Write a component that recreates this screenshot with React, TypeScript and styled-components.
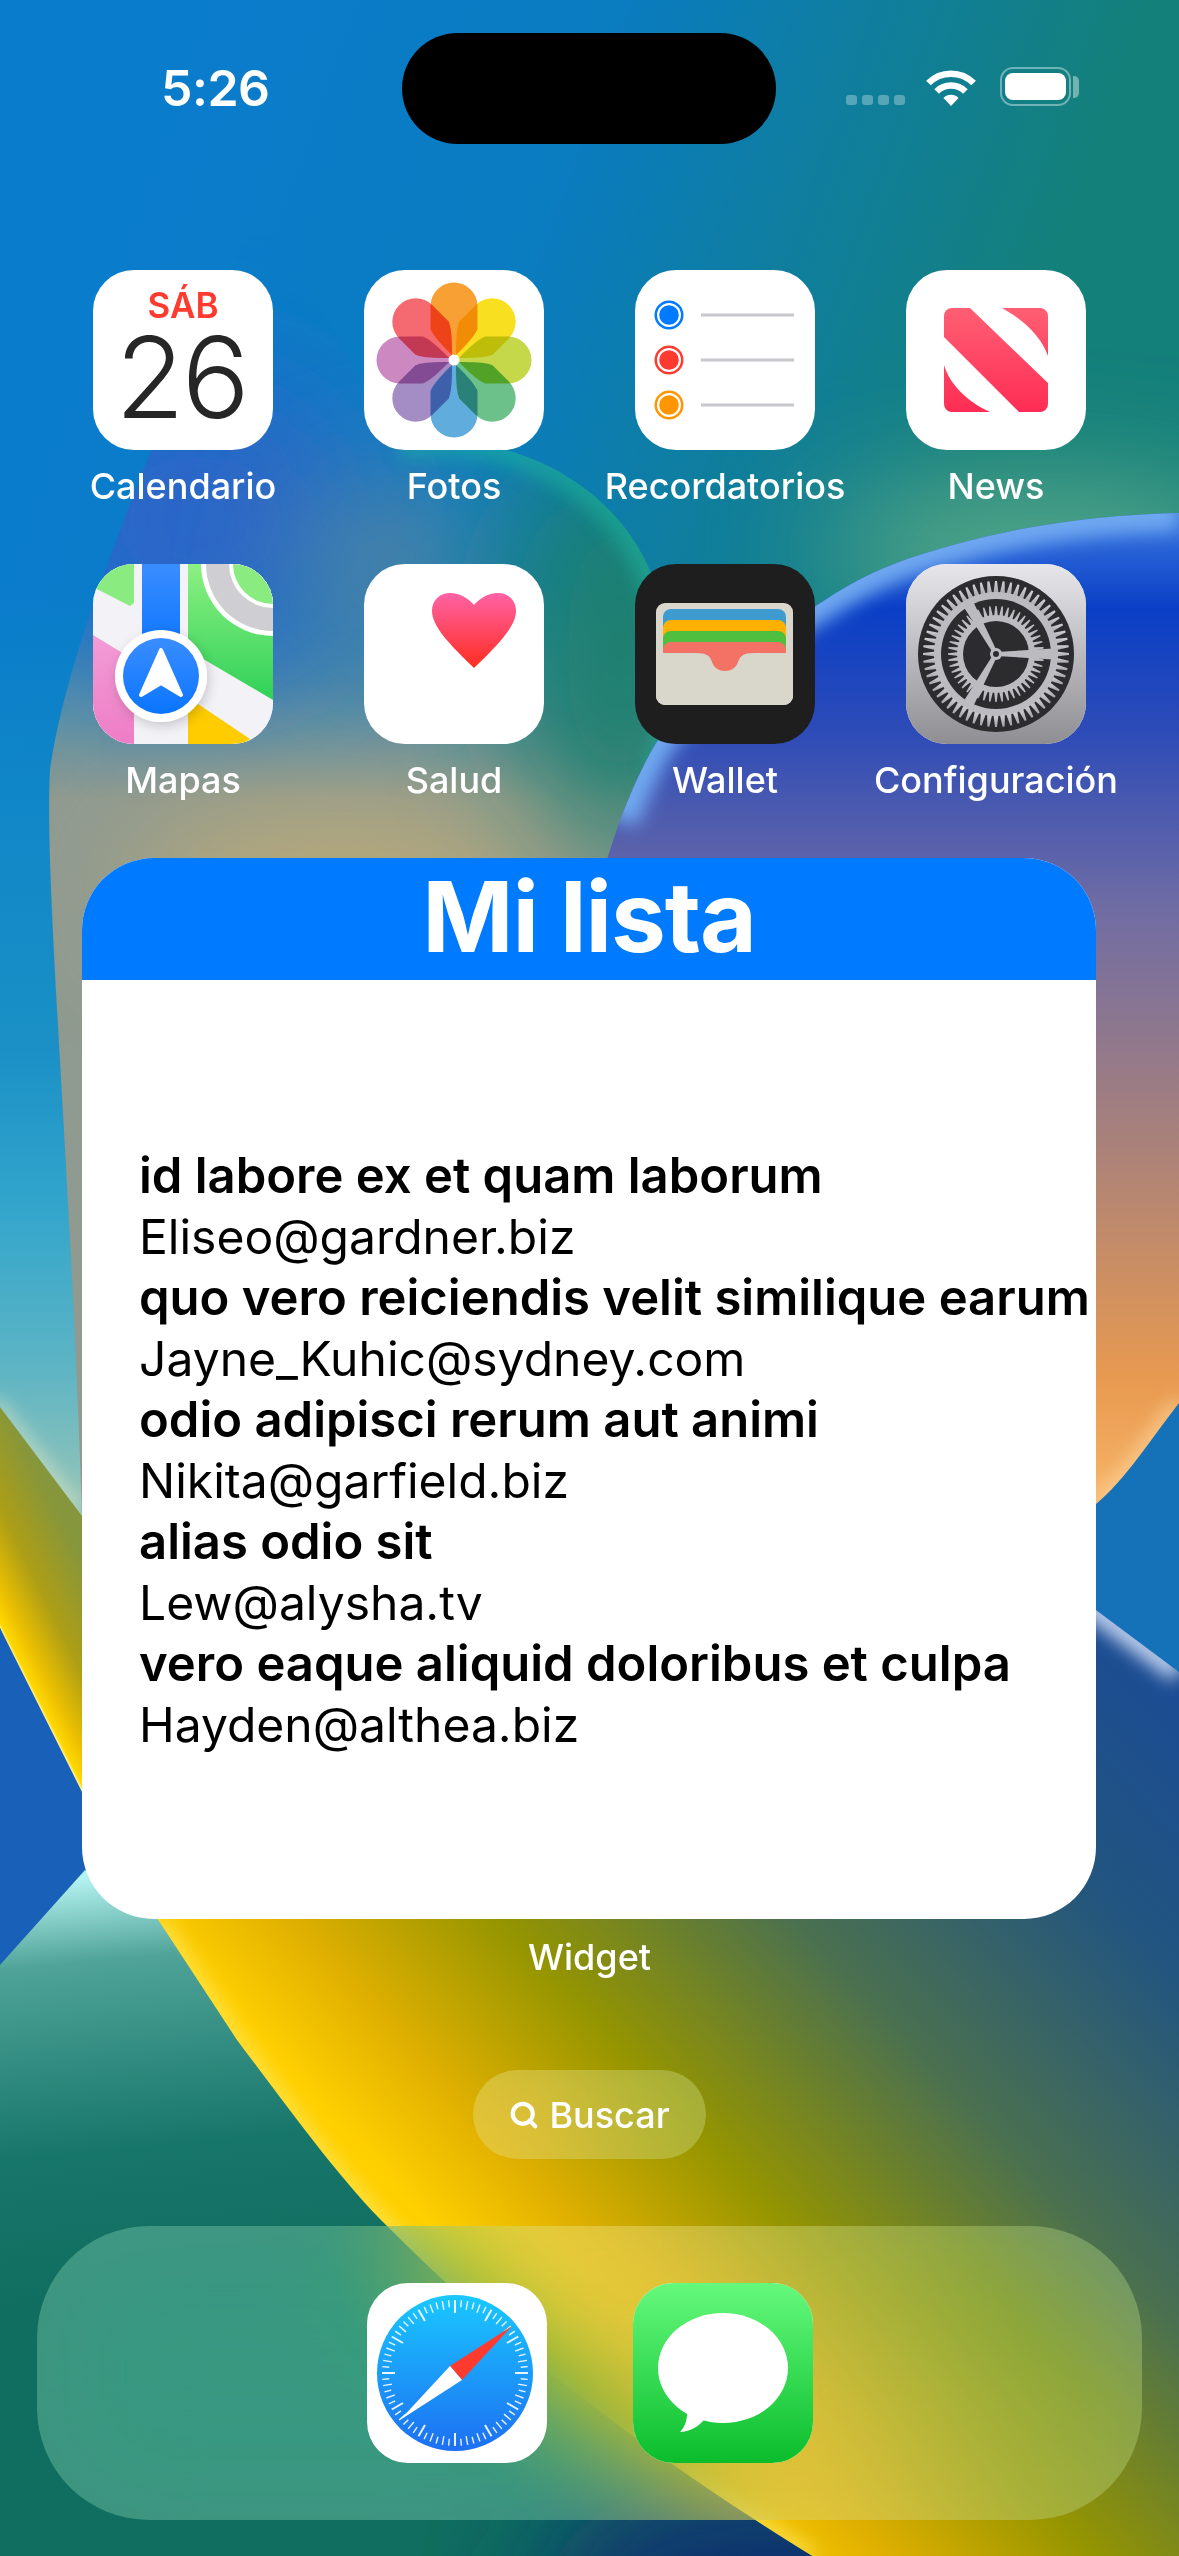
import { ReactNode } from "react";
import styled, { createGlobalStyle } from "styled-components";
import { Search } from "lucide-react";

const GlobalStyle = createGlobalStyle`
  html, body {
    margin: 0;
    padding: 0;
    width: 1179px;
    height: 2556px;
    overflow: hidden;
    font-family: "Inter", "Liberation Sans", sans-serif;
  }
`;

const Screen = styled.div`
  position: relative;
  width: 1179px;
  height: 2556px;
  overflow: hidden;
  display: flex;
  flex-direction: column;
  color: #fff;
  background: #0a7cc8;
`;

const WallpaperSvg = styled.svg`
  position: absolute;
  inset: 0;
  width: 1179px;
  height: 2556px;
`;

const Content = styled.div`
  position: relative;
  display: flex;
  flex-direction: column;
`;

const StatusBar = styled.div`
  display: flex;
  align-items: center;
  height: 111px;
  margin-top: 33px;
`;

const TimeSlot = styled.div`
  width: 402px;
  padding-left: 161px;
  box-sizing: border-box;
  font-size: 50px;
  font-weight: 600;
  letter-spacing: -0.5px;
  line-height: 111px;
  height: 111px;
`;

const Island = styled.div`
  width: 374px;
  height: 111px;
  border-radius: 56px;
  background: #000;
`;

const StatusIcons = styled.div`
  display: flex;
  align-items: flex-end;
  padding-left: 70px;
  padding-bottom: 4px;
`;

const SignalDots = styled.div`
  display: flex;
  gap: 5px;
  margin-right: 21px;
  margin-bottom: 1px;
`;

const SignalDot = styled.div`
  width: 11px;
  height: 10px;
  border-radius: 3px;
  background: rgba(255, 255, 255, 0.3);
`;

const BatteryBody = styled.div`
  width: 71px;
  height: 39px;
  box-sizing: border-box;
  margin-left: 24px;
  padding: 4px 3px 4px 3px;
  border: 2px solid rgba(255, 255, 255, 0.4);
  border-radius: 13px;
`;

const BatteryFill = styled.div`
  height: 100%;
  border-radius: 8px;
  background: #fff;
`;

const BatteryNub = styled.div`
  width: 6px;
  height: 22px;
  margin: 0 0 8px 2px;
  border-radius: 0 5px 5px 0;
  background: rgba(255, 255, 255, 0.4);
`;

const AppGrid = styled.div`
  display: grid;
  grid-template-columns: repeat(4, 180px);
  column-gap: 91px;
  row-gap: 58px;
  margin: 126px 0 0 93px;
`;

const Tile = styled.div`
  display: flex;
  flex-direction: column;
  align-items: center;
  height: 236px;
`;

const AppIcon = styled.div<{ $bg?: string }>`
  width: 180px;
  height: 180px;
  flex: none;
  border-radius: 41px;
  overflow: hidden;
  position: relative;
  background: ${(p) => p.$bg || "#fff"};

  svg {
    display: block;
  }
`;

const AppLabel = styled.div`
  margin-top: 16px;
  font-size: 36px;
  line-height: 40px;
  font-weight: 500;
  white-space: nowrap;
`;

const CalendarFace = styled.div`
  display: flex;
  flex-direction: column;
  align-items: center;
  height: 100%;
`;

const CalendarDay = styled.div`
  margin-top: 15px;
  font-size: 35px;
  line-height: 40px;
  font-weight: 600;
  color: #ff3b30;
`;

const CalendarDate = styled.div`
  margin-left: -4px;
  font-size: 113px;
  line-height: 104px;
  font-weight: 300;
  letter-spacing: -3px;
  color: #262626;
`;

const Widget = styled.div`
  display: flex;
  flex-direction: column;
  width: 1014px;
  height: 1061px;
  margin: 58px 0 0 82px;
  border-radius: 72px;
  overflow: hidden;
  background: #fff;
`;

const WidgetHeader = styled.div`
  height: 122px;
  background: #007aff;
  text-align: center;
  font-size: 98px;
  line-height: 118px;
  font-weight: 700;
  letter-spacing: -1.1px;
  flex: none;
`;

const WidgetBody = styled.div`
  flex: 1;
  display: flex;
  flex-direction: column;
  justify-content: center;
  padding-left: 57px;
  color: #000;
`;

const ItemLine = styled.div<{ $bold?: boolean }>`
  font-size: ${(p) => (p.$bold ? "49px" : "48px")};
  line-height: 61px;
  font-weight: ${(p) => (p.$bold ? 600 : 400)};
  white-space: nowrap;
`;

const WidgetLabel = styled.div`
  margin-top: 18px;
  text-align: center;
  font-size: 36px;
  line-height: 40px;
  font-weight: 500;
`;

const SearchPill = styled.div`
  display: flex;
  align-items: center;
  justify-content: center;
  gap: 10px;
  align-self: center;
  width: 233px;
  height: 89px;
  margin-top: 93px;
  border-radius: 45px;
  font-size: 36px;
  font-weight: 500;
  background: rgba(225, 255, 215, 0.25);
  backdrop-filter: blur(40px) saturate(1.5);
`;

const Dock = styled.div`
  display: flex;
  align-items: center;
  justify-content: center;
  gap: 86px;
  width: 1105px;
  height: 294px;
  margin: 67px 0 0 37px;
  border-radius: 112px;
  background: rgba(225, 255, 225, 0.25);
  backdrop-filter: blur(70px) saturate(1.4);
`;

const lowEdge = "M157 1918 L237 2040 C290 2110 340 2180 387 2226 C500 2340 640 2450 812 2556";

const Wallpaper = () => (
  <WallpaperSvg viewBox="0 0 1179 2556" aria-hidden="true">
    <defs>
      <linearGradient id="sky" gradientUnits="userSpaceOnUse" x1="150" y1="120" x2="1000" y2="420">
        <stop offset="0" stopColor="#0a7ccc" />
        <stop offset="0.45" stopColor="#0a7cc0" />
        <stop offset="1" stopColor="#14807a" />
      </linearGradient>
      <linearGradient id="strip" gradientUnits="userSpaceOnUse" x1="0" y1="600" x2="0" y2="1500">
        <stop offset="0" stopColor="#0f86c8" stopOpacity="0" />
        <stop offset="0.2" stopColor="#0f86c8" />
        <stop offset="0.5" stopColor="#1a90c6" />
        <stop offset="0.68" stopColor="#34a6cc" />
        <stop offset="0.85" stopColor="#5cb4c4" />
        <stop offset="1" stopColor="#94c4b8" />
      </linearGradient>
      <linearGradient id="blobBase" gradientUnits="userSpaceOnUse" x1="0" y1="580" x2="0" y2="800">
        <stop offset="0" stopColor="#8f9a90" stopOpacity="0" />
        <stop offset="1" stopColor="#8f9a90" />
      </linearGradient>
      <linearGradient id="blobB" gradientUnits="userSpaceOnUse" x1="0" y1="510" x2="0" y2="1500">
        <stop offset="0" stopColor="#3a78e0" />
        <stop offset="0.1" stopColor="#0a3fc6" />
        <stop offset="0.22" stopColor="#2c4bb8" />
        <stop offset="0.4" stopColor="#6f6ca4" />
        <stop offset="0.65" stopColor="#ac8278" />
        <stop offset="0.88" stopColor="#e89a50" />
        <stop offset="1" stopColor="#f6b468" />
      </linearGradient>
      <linearGradient id="bandLeft" gradientUnits="userSpaceOnUse" x1="175" y1="1640" x2="40" y2="1708">
        <stop offset="0.3" stopColor="#85963c" />
        <stop offset="0.65" stopColor="#ae9e14" />
        <stop offset="0.88" stopColor="#ecc000" />
        <stop offset="0.98" stopColor="#ffd800" />
        <stop offset="1" stopColor="#fff0a0" />
      </linearGradient>
      <linearGradient id="tealLow" gradientUnits="userSpaceOnUse" x1="60" y1="1880" x2="100" y2="2300">
        <stop offset="0" stopColor="#b4f2f0" />
        <stop offset="0.2" stopColor="#4fa398" />
        <stop offset="0.65" stopColor="#17766a" />
        <stop offset="1" stopColor="#0f6e5f" />
      </linearGradient>
      <linearGradient id="band" gradientUnits="userSpaceOnUse" x1="500" y1="2300" x2="1197" y2="1649">
        <stop offset="0" stopColor="#ffd000" />
        <stop offset="0.11" stopColor="#e0b000" />
        <stop offset="0.27" stopColor="#959500" />
        <stop offset="0.5" stopColor="#4a7050" />
        <stop offset="0.75" stopColor="#22557f" />
        <stop offset="1" stopColor="#1a4a98" />
      </linearGradient>
      <filter id="soft" filterUnits="userSpaceOnUse" x="-400" y="-400" width="2000" height="3400">
        <feGaussianBlur stdDeviation="60" />
      </filter>
      <filter id="edge" filterUnits="userSpaceOnUse" x="-400" y="-400" width="2000" height="3400">
        <feGaussianBlur stdDeviation="9" />
      </filter>
      <clipPath id="clipA">
        <path d="M262 205 C200 330 70 620 50 770 C44 880 70 1150 82 1516 L650 1516 L655 780 C672 760 680 700 665 620 C640 480 500 425 400 445 Z" />
      </clipPath>
      <clipPath id="clipB">
        <path d="M1179 513 C1100 515 1030 525 972 540 C910 556 870 570 825 600 C760 640 690 700 656 743 C640 770 630 795 620 820 L560 1000 L560 1560 L1000 1560 L1096 1504 C1125 1480 1150 1440 1179 1403 Z" />
      </clipPath>
      <clipPath id="clipBand">
        <path d="M100 1640 L1000 1540 L1096 1610 L1179 1672 V2556 H100 Z" />
      </clipPath>
      <clipPath id="clipTeal">
        <path d={`M0 1965 L85 1870 L157 1918 ${lowEdge.slice(lowEdge.indexOf("L"))} L0 2556 Z`} />
      </clipPath>
    </defs>

    <rect width="1179" height="2556" fill="url(#sky)" />
    <ellipse cx="1040" cy="550" rx="220" ry="60" fill="#62ae8c" filter="url(#soft)" />
    <rect x="0" y="600" width="100" height="920" fill="url(#strip)" />

    <g clipPath="url(#clipA)">
      <rect x="0" y="580" width="700" height="940" fill="url(#blobBase)" />
      <ellipse cx="200" cy="520" rx="170" ry="150" fill="#2a66c8" filter="url(#soft)" />
      <ellipse cx="390" cy="570" rx="100" ry="90" fill="#4f84a4" filter="url(#soft)" />
      <ellipse cx="620" cy="650" rx="110" ry="200" fill="#1f8070" filter="url(#soft)" />
      <ellipse cx="340" cy="890" rx="210" ry="70" fill="#c0ac74" filter="url(#soft)" />
      <path
        d="M400 445 C500 425 640 480 665 620 C680 700 672 760 655 780"
        fill="none"
        stroke="#1db8a0"
        strokeWidth="30"
        opacity="0.55"
        filter="url(#edge)"
      />
    </g>

    <rect x="1000" y="1380" width="179" height="320" fill="#1572b8" />

    <g clipPath="url(#clipB)">
      <rect x="560" y="500" width="619" height="1080" fill="url(#blobB)" />
      <path
        d="M1179 513 C1100 515 1030 525 972 540 C910 556 870 570 825 600 C760 640 690 700 656 743 C640 770 630 795 620 820"
        fill="none"
        stroke="#6fa8f0"
        strokeWidth="36"
        filter="url(#edge)"
      />
      <path d="M1096 1504 C1125 1480 1150 1440 1179 1403" fill="none" stroke="#ffd8a0" strokeWidth="10" filter="url(#edge)" />
    </g>

    <path d="M-6 1401 L76 1510" fill="none" stroke="#f2f0c8" strokeWidth="7" filter="url(#edge)" />
    <path d="M0 1407 L82 1516 L120 1700 L120 1900 L0 1628 Z" fill="url(#bandLeft)" />
    <path d="M0 1628 L82 1792 L120 1880 L0 1965 Z" fill="#1860b8" />

    <g clipPath="url(#clipBand)">
      <rect x="100" y="1500" width="1079" height="1056" fill="url(#band)" />
      <path d="M1000 1540 L1096 1610 L1179 1672" fill="none" stroke="#c8d8f4" strokeWidth="22" filter="url(#edge)" />
      <path d={lowEdge} fill="none" stroke="#fff080" strokeWidth="8" filter="url(#edge)" />
    </g>

    <g clipPath="url(#clipTeal)">
      <rect x="0" y="1860" width="900" height="700" fill="url(#tealLow)" />
      <ellipse cx="780" cy="2600" rx="240" ry="130" fill="#103070" filter="url(#soft)" />
    </g>
  </WallpaperSvg>
);

const PhotosArt = () => {
  const petals = ["#f9a035", "#f8e020", "#c4d84a", "#6cc08a", "#60acdc", "#a48cc4", "#cc88c0", "#f46a70"];
  return (
    <svg width="180" height="180" viewBox="0 0 180 180" style={{ isolation: "isolate" }}>
      {petals.map((c, i) => (
        <path
          key={c}
          d="M90 87 Q70 68 66.5 59 L66.5 36 A23.5 23.5 0 0 1 113.5 36 L113.5 59 Q110 68 90 87 Z"
          fill={c}
          transform={`rotate(${i * 45} 90 90)`}
          style={{ mixBlendMode: "multiply" }}
        />
      ))}
      <circle cx="90" cy="90" r="5.5" fill="#fff" />
    </svg>
  );
};

const RemindersArt = () => (
  <svg width="180" height="180" viewBox="0 0 180 180">
    {[
      { y: 45, c: "#007aff" },
      { y: 90, c: "#ff3b30" },
      { y: 135, c: "#ff9500" },
    ].map((r) => (
      <g key={r.y}>
        <circle cx="34" cy={r.y} r="14.5" fill={r.c} />
        <circle cx="34" cy={r.y} r="12" fill="#fff" />
        <circle cx="34" cy={r.y} r="9.8" fill={r.c} />
        <rect x="66" y={r.y - 1.5} width="93" height="3" fill="#c7c7cc" />
      </g>
    ))}
  </svg>
);

const NewsArt = () => (
  <svg width="180" height="180" viewBox="0 0 180 180">
    <defs>
      <linearGradient id="news" gradientUnits="userSpaceOnUse" x1="0" y1="38" x2="0" y2="142">
        <stop offset="0" stopColor="#ff5f73" />
        <stop offset="1" stopColor="#ff2d55" />
      </linearGradient>
    </defs>
    <g fill="url(#news)">
      <path d="M38 46 a8 8 0 0 1 8 -8 H64 L142 113 V134 a8 8 0 0 1 -8 8 H113 L38 67 Z" />
      <path d="M96 38 H134 a8 8 0 0 1 8 8 V86 C136 68 118 50 96 38 Z" />
      <path d="M38 95 C44 115 62 132 84 142 H46 a8 8 0 0 1 -8 -8 Z" />
    </g>
  </svg>
);

const MapsArt = () => (
  <svg width="180" height="180" viewBox="0 0 180 180">
    <defs>
      <linearGradient id="mapGreen" x1="0" y1="0" x2="0" y2="1">
        <stop offset="0" stopColor="#8cf082" />
        <stop offset="1" stopColor="#30d158" />
      </linearGradient>
      <linearGradient id="mapBlue" x1="0" y1="0" x2="0" y2="1">
        <stop offset="0" stopColor="#3a8dff" />
        <stop offset="1" stopColor="#0a75ff" />
      </linearGradient>
      <linearGradient id="mapPink" x1="0" y1="0" x2="0" y2="1">
        <stop offset="0" stopColor="#f39cd6" />
        <stop offset="1" stopColor="#ee7dc6" />
      </linearGradient>
      <filter id="mapShadow" x="-30%" y="-30%" width="160%" height="160%">
        <feDropShadow dx="2" dy="4" stdDeviation="6" floodColor="#000" floodOpacity="0.18" />
      </filter>
    </defs>
    <rect width="180" height="180" fill="#f2f2f7" />
    <path d="M0 0 H41 V39 L37 42 L0 23 Z" fill="#8aec80" />
    <path d="M95 0 H180 V136 L95 86 Z" fill="url(#mapGreen)" />
    <circle cx="180" cy="0" r="72" fill="#fff" />
    <circle cx="180" cy="0" r="67" fill="#cfcfd3" />
    <circle cx="180" cy="0" r="44" fill="#fff" />
    <circle cx="180" cy="0" r="40" fill="#8aec80" />
    <path d="M0 71 L41 96 V180 H0 Z" fill="url(#mapPink)" />
    <path d="M95 145 L105 140 L157 175 L150 180 H95 Z" fill="#ffcc00" />
    <rect x="49" y="0" width="38" height="90" fill="url(#mapBlue)" />
    <circle cx="68" cy="112" r="46" fill="#fff" filter="url(#mapShadow)" />
    <circle cx="68" cy="112" r="38" fill="url(#mapBlue)" />
    <path
      d="M68 86 L88 131 L68 119 L48 131 Z"
      fill="#fff"
      stroke="#fff"
      strokeWidth="4"
      strokeLinejoin="round"
    />
  </svg>
);

const HealthArt = () => (
  <svg width="180" height="180" viewBox="0 0 180 180">
    <defs>
      <linearGradient id="heart" x1="0" y1="0" x2="0" y2="1">
        <stop offset="0" stopColor="#ff62a5" />
        <stop offset="1" stopColor="#ff2d20" />
      </linearGradient>
    </defs>
    <path
      d="M110 104 C85 80 68 62 68 47 C68 36 76 29 86 29 C96 29 104 34 110 41 C116 34 124 29 134 29 C144 29 152 36 152 47 C152 62 135 80 110 104 Z"
      fill="url(#heart)"
    />
  </svg>
);

const WalletArt = () => (
  <svg width="180" height="180" viewBox="0 0 180 180">
    <rect x="21" y="39" width="137" height="102" rx="9" fill="#d9d7cb" />
    <rect x="28" y="45" width="123" height="40" rx="8" fill="#3d9bd0" />
    <rect x="28" y="56" width="123" height="40" rx="8" fill="#ffb000" />
    <rect x="28" y="67" width="123" height="40" rx="8" fill="#4fbf3f" />
    <rect x="28" y="78" width="123" height="40" rx="8" fill="#f47265" />
    <path
      d="M21 89 H60 C72 89 75 92 77 98 C79 104 84 107 90 107 C96 107 101 104 103 98 C105 92 108 89 120 89 H158 V132 a9 9 0 0 1 -9 9 H30 a9 9 0 0 1 -9 -9 Z"
      fill="#d9d7cb"
    />
  </svg>
);

const SettingsArt = () => {
  const cx = 90;
  const cy = 90;
  const tooth = (a: number, r1: number, r2: number, w1: number, w2: number) => {
    const rad = (a * Math.PI) / 180;
    const ux = Math.cos(rad);
    const uy = Math.sin(rad);
    const pt = (r: number, w: number) =>
      `${(cx + ux * r - uy * w).toFixed(2)},${(cy + uy * r + ux * w).toFixed(2)}`;
    return [pt(r1, w1), pt(r2, w2), pt(r2, -w2), pt(r1, -w1)].join(" ");
  };
  return (
    <svg width="180" height="180" viewBox="0 0 180 180">
      <defs>
        <linearGradient id="gearBg" x1="0" y1="0" x2="0" y2="1">
          <stop offset="0" stopColor="#e6e6eb" />
          <stop offset="1" stopColor="#8e8e93" />
        </linearGradient>
        <linearGradient id="gearLight" x1="0" y1="0" x2="0" y2="1">
          <stop offset="0" stopColor="#d4d4d8" />
          <stop offset="1" stopColor="#a4a4a8" />
        </linearGradient>
      </defs>
      <rect width="180" height="180" fill="url(#gearBg)" />
      <circle cx={cx} cy={cy} r="78" fill="#2c2c2e" />
      {Array.from({ length: 60 }, (_, i) => (
        <polygon key={i} points={tooth(i * 6, 60, 73, 2.6, 1)} fill="url(#gearLight)" />
      ))}
      <circle cx={cx} cy={cy} r="62" fill="#bcbcc0" />
      <circle cx={cx} cy={cy} r="55" fill="#2c2c2e" />
      {Array.from({ length: 48 }, (_, i) => (
        <polygon key={i} points={tooth(i * 7.5, 37, 48, 2, 0.7)} fill="#bcbcc0" />
      ))}
      <circle cx={cx} cy={cy} r="39" fill="#bcbcc0" />
      <circle cx={cx} cy={cy} r="33" fill="#2c2c2e" />
      {[0, 119, 241].map((a) => (
        <polygon key={a} points={tooth(a, 0, 57, 2, 5.5)} fill="#bcbcc0" />
      ))}
      <circle cx={cx} cy={cy} r="6" fill="#bcbcc0" />
      <circle cx={cx} cy={cy} r="3" fill="#2c2c2e" />
    </svg>
  );
};

const SafariArt = () => {
  const cx = 88;
  const cy = 90;
  return (
    <svg width="180" height="180" viewBox="0 0 180 180">
      <defs>
        <linearGradient id="safari" x1="0" y1="0" x2="0" y2="1">
          <stop offset="0" stopColor="#1ac8ff" />
          <stop offset="1" stopColor="#1d6ff2" />
        </linearGradient>
      </defs>
      <circle cx={cx} cy={cy} r="78" fill="url(#safari)" />
      {Array.from({ length: 72 }, (_, i) => {
        const a = (i * 5 * Math.PI) / 180;
        const major = i % 6 === 0;
        const r1 = major ? 60 : i % 2 === 0 ? 64 : 66;
        const r2 = 73;
        return (
          <line
            key={i}
            x1={cx + Math.cos(a) * r1}
            y1={cy + Math.sin(a) * r1}
            x2={cx + Math.cos(a) * r2}
            y2={cy + Math.sin(a) * r2}
            stroke="#fff"
            strokeWidth={major ? 2 : 1.4}
            opacity={0.9}
          />
        );
      })}
      <polygon points="145,43 83,83 95,97" fill="#ff3b30" />
      <polygon points="33,137 83,83 95,97" fill="#fff" />
    </svg>
  );
};

const MessagesArt = () => (
  <svg width="180" height="180" viewBox="0 0 180 180">
    <defs>
      <linearGradient id="messages" x1="0" y1="0" x2="0" y2="1">
        <stop offset="0" stopColor="#65f97c" />
        <stop offset="1" stopColor="#0abd2c" />
      </linearGradient>
    </defs>
    <rect width="180" height="180" fill="url(#messages)" />
    <ellipse cx="90" cy="85" rx="65" ry="55" fill="#fff" />
    <path d="M54 125 C55 136 52 144 47 149 C56 149 65 144 72 136 Z" fill="#fff" />
  </svg>
);

const WifiIcon = () => (
  <svg width="50" height="37" viewBox="0 0 50 37">
    <path d="M2.4 14 A32 32 0 0 1 47.6 14" fill="none" stroke="#fff" strokeWidth="6.5" />
    <path d="M10.6 22.5 A20.5 20.5 0 0 1 39.4 22.5" fill="none" stroke="#fff" strokeWidth="6.5" />
    <path d="M25 37 L17.5 29 A10.5 10.5 0 0 1 32.5 29 Z" fill="#fff" />
  </svg>
);

const apps: { name: string; bg?: string; art: ReactNode }[] = [
  {
    name: "Calendario",
    art: (
      <CalendarFace>
        <CalendarDay>SÁB</CalendarDay>
        <CalendarDate>26</CalendarDate>
      </CalendarFace>
    ),
  },
  { name: "Fotos", art: <PhotosArt /> },
  { name: "Recordatorios", art: <RemindersArt /> },
  { name: "News", art: <NewsArt /> },
  { name: "Mapas", art: <MapsArt /> },
  { name: "Salud", art: <HealthArt /> },
  { name: "Wallet", bg: "#1e1e1e", art: <WalletArt /> },
  { name: "Configuración", art: <SettingsArt /> },
];

const items = [
  { title: "id labore ex et quam laborum", email: "Eliseo@gardner.biz" },
  { title: "quo vero reiciendis velit similique earum", email: "Jayne_Kuhic@sydney.com" },
  { title: "odio adipisci rerum aut animi", email: "Nikita@garfield.biz" },
  { title: "alias odio sit", email: "Lew@alysha.tv" },
  { title: "vero eaque aliquid doloribus et culpa", email: "Hayden@althea.biz" },
];

export default function App() {
  return (
    <Screen>
      <GlobalStyle />
      <Wallpaper />
      <Content>
        <StatusBar>
          <TimeSlot>5:26</TimeSlot>
          <Island />
          <StatusIcons>
            <SignalDots>
              <SignalDot />
              <SignalDot />
              <SignalDot />
              <SignalDot />
            </SignalDots>
            <WifiIcon />
            <BatteryBody>
              <BatteryFill />
            </BatteryBody>
            <BatteryNub />
          </StatusIcons>
        </StatusBar>

        <AppGrid>
          {apps.map((app) => (
            <Tile key={app.name}>
              <AppIcon $bg={app.bg}>{app.art}</AppIcon>
              <AppLabel>{app.name}</AppLabel>
            </Tile>
          ))}
        </AppGrid>

        <Widget>
          <WidgetHeader>Mi lista</WidgetHeader>
          <WidgetBody>
            {items.map((item) => (
              <div key={item.email}>
                <ItemLine $bold>{item.title}</ItemLine>
                <ItemLine>{item.email}</ItemLine>
              </div>
            ))}
          </WidgetBody>
        </Widget>
        <WidgetLabel>Widget</WidgetLabel>

        <SearchPill>
          <Search size={30} strokeWidth={3.4} />
          Buscar
        </SearchPill>

        <Dock>
          <AppIcon>
            <SafariArt />
          </AppIcon>
          <AppIcon>
            <MessagesArt />
          </AppIcon>
        </Dock>
      </Content>
    </Screen>
  );
}
